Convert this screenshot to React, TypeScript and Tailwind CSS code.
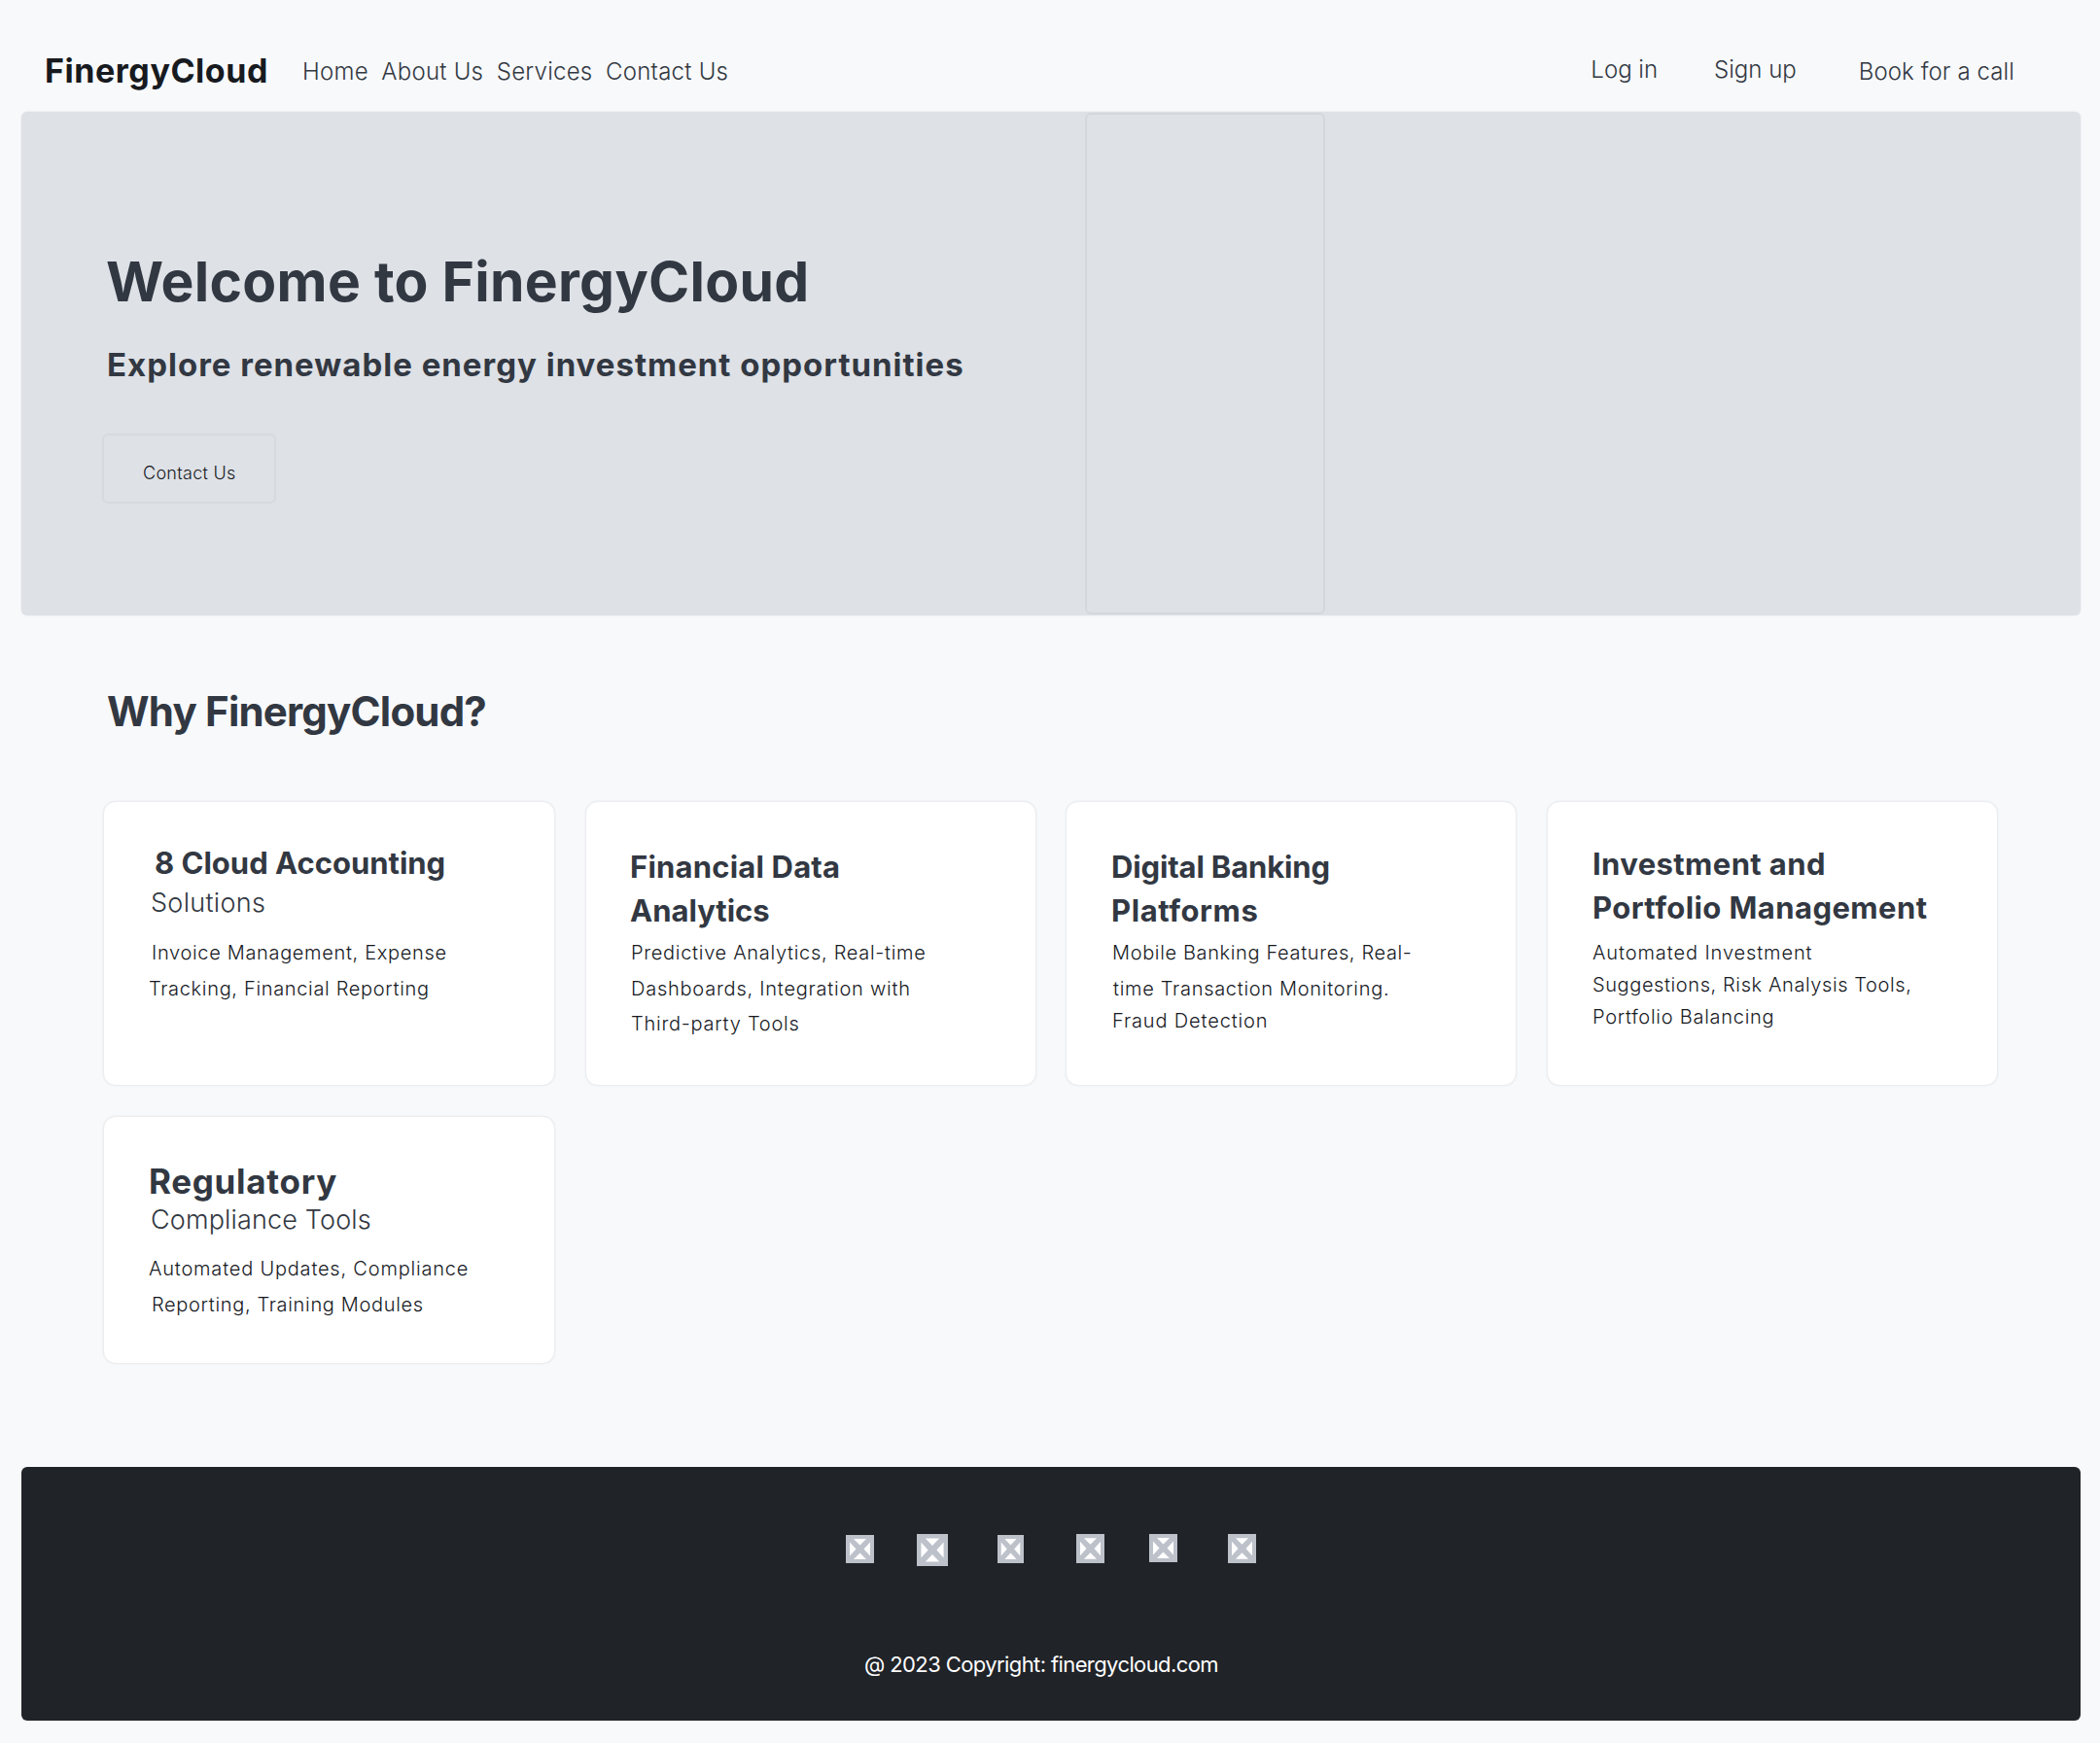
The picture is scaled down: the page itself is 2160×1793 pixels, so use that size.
type Item = { text: string; cls: string };

const h = "text-[31px] font-bold text-[#323842]";
const s = "text-[27px] font-light text-[#323842]";
const p = "text-[20px] font-light text-[#171a1f]";

const cards: { box: string; lines: Item[] }[] = [
  { box: "w-[465px] h-[293px]", lines: [
    { text: "8 Cloud Accounting", cls: `${h} mt-[47px] ml-[52px]` },
    { text: "Solutions", cls: `${s} mt-[12px] ml-[48px] tracking-[0.3px]` },
    { text: "Invoice Management, Expense", cls: `${p} mt-[28px] ml-[49px] tracking-[0.67px]` },
    { text: "Tracking, Financial Reporting", cls: `${p} mt-[17px] ml-[46px] tracking-[0.67px]` },
  ] },
  { box: "w-[464px] h-[293px] ml-[31px]", lines: [
    { text: "Financial Data", cls: `${h} mt-[51px] ml-[45px] tracking-[0.2px]` },
    { text: "Analytics", cls: `${h} mt-[14px] ml-[45px]` },
    { text: "Predictive Analytics, Real-time", cls: `${p} mt-[18px] ml-[46px] tracking-[0.7px]` },
    { text: "Dashboards, Integration with", cls: `${p} mt-[17px] ml-[46px] tracking-[0.77px]` },
    { text: "Third-party Tools", cls: `${p} mt-[16px] ml-[46px] tracking-[0.75px]` },
  ] },
  { box: "w-[464px] h-[293px] ml-[30px]", lines: [
    { text: "Digital Banking", cls: `${h} mt-[51px] ml-[46px] tracking-[-0.15px]` },
    { text: "Platforms", cls: `${h} mt-[14px] ml-[46px] tracking-[0.6px]` },
    { text: "Mobile Banking Features, Real-", cls: `${p} mt-[18px] ml-[47px] tracking-[0.64px]` },
    { text: "time Transaction Monitoring.", cls: `${p} mt-[17px] ml-[48px] tracking-[0.7px]` },
    { text: "Fraud Detection", cls: `${p} mt-[13px] ml-[47px] tracking-[0.86px]` },
  ] },
  { box: "w-[464px] h-[293px] ml-[31px]", lines: [
    { text: "Investment and", cls: `${h} mt-[48px] ml-[46px] tracking-[0.4px]` },
    { text: "Portfolio Management", cls: `${h} mt-[14px] ml-[46px] tracking-[0.43px]` },
    { text: "Automated Investment", cls: `${p} mt-[21px] ml-[46px] tracking-[0.9px]` },
    { text: "Suggestions, Risk Analysis Tools,", cls: `${p} mt-[13px] ml-[46px] tracking-[0.6px]` },
    { text: "Portfolio Balancing", cls: `${p} mt-[13px] ml-[46px] tracking-[0.73px]` },
  ] },
  { box: "w-[465px] h-[255px] mt-[31px]", lines: [
    { text: "Regulatory", cls: "text-[35px] font-bold text-[#323842] mt-[49px] ml-[46px] tracking-[0.7px]" },
    { text: "Compliance Tools", cls: `${s} mt-[8px] ml-[48px] tracking-[0.15px]` },
    { text: "Automated Updates, Compliance", cls: `${p} mt-[27px] ml-[46px] tracking-[0.8px]` },
    { text: "Reporting, Training Modules", cls: `${p} mt-[17px] ml-[49px] tracking-[0.67px]` },
  ] },
];

const icons = [
  "w-[29px] h-[29px] mt-[1px]",
  "w-[32px] h-[33px] ml-[44px]",
  "w-[27px] h-[29px] ml-[51px] mt-[1px]",
  "w-[29px] h-[30px] ml-[54px]",
  "w-[29px] h-[29px] ml-[46px]",
  "w-[29px] h-[30px] ml-[52px]",
];

function Line({ text, cls }: Item) {
  return <div className={`leading-none whitespace-nowrap ${cls}`}>{text}</div>;
}

export default function App() {
  return (
    <div className="w-[2160px] h-[1793px] bg-[#f8f9fb] overflow-hidden px-[22px] font-['Inter',sans-serif]">
      <header className="flex items-start h-[115px]">
        <Line text="FinergyCloud" cls="mt-[56px] ml-[24px] text-[34px] font-bold text-[#171a1f] tracking-[0.55px]" />
        <nav className="flex mt-[62px] ml-[35px] gap-[13.5px] text-[24px] font-light text-[#323842] tracking-[0.25px]">
          {["Home", "About Us", "Services", "Contact Us"].map((t) => <Line key={t} text={t} cls="" />)}
        </nav>
        <div className="flex ml-auto text-[24px] font-light text-[#323842] mr-[66px]">
          <Line text="Log in" cls="mt-[60px] mr-[58px]" />
          <Line text="Sign up" cls="mt-[60px] mr-[64px]" />
          <Line text="Book for a call" cls="mt-[62px] tracking-[0.1px]" />
        </div>
      </header>
      <section className="flex w-[2118px] h-[518px] rounded-[6px] bg-[#dee1e6] shadow-[0_0_2px_rgba(23,26,31,0.12)]">
        <div className="w-[1094px]">
          <Line text="Welcome to FinergyCloud" cls="mt-[146px] ml-[87px] text-[57px] font-bold text-[#323842] tracking-[0.28px]" />
          <Line text="Explore renewable energy investment opportunities" cls="mt-[41px] ml-[88px] text-[33px] font-bold text-[#323842] tracking-[1px]" />
          <div className="mt-[54px] ml-[83px] w-[179px] h-[72px] rounded-[6px] border-2 border-[#d6dade]">
            <Line text="Contact Us" cls="mt-[30px] ml-[40px] text-[18px] font-light text-[#171a1f] tracking-[0.28px]" />
          </div>
        </div>
        <div className="w-[247px] h-[516px] mt-[1px] rounded-[6px] border-2 border-[#d3d8dc]" />
      </section>
      <Line text="Why FinergyCloud?" cls="mt-[78px] ml-[88px] text-[42px] font-bold text-[#323842] tracking-[-0.8px]" />
      <main className="flex flex-wrap mt-[71px] ml-[84px]">
        {cards.map((c, i) => (
          <div key={i} className={`bg-white border border-[#ebedf0] shadow-[0_0_2px_rgba(23,26,31,0.08)] rounded-[13px] overflow-hidden ${c.box}`}>
            {c.lines.map((l) => <Line key={l.text} {...l} />)}
          </div>
        ))}
      </main>
      <footer className="mt-[106px] w-[2118px] h-[261px] rounded-[6px] bg-[#202328]">
        <div className="flex pt-[69px] pl-[848px] h-[184px]">
          {icons.map((c, i) => (
            <svg key={i} className={c} viewBox="0 0 29 29" preserveAspectRatio="none">
              <path fill="#bdc1ca" d="M0 0h29v29H0z" />
              <path fill="#fff" d="M8 4h13l-6.500 6.500zM8 25h13l-6.500-6.500zM4 7.500v14l6.500-7zM25 7.500v14l-6.500-7z" />
            </svg>
          ))}
        </div>
        <Line text="@ 2023 Copyright: finergycloud.com" cls="mt-[8px] ml-[867px] text-[22px] text-white tracking-[-0.6px]" />
      </footer>
    </div>
  );
}
